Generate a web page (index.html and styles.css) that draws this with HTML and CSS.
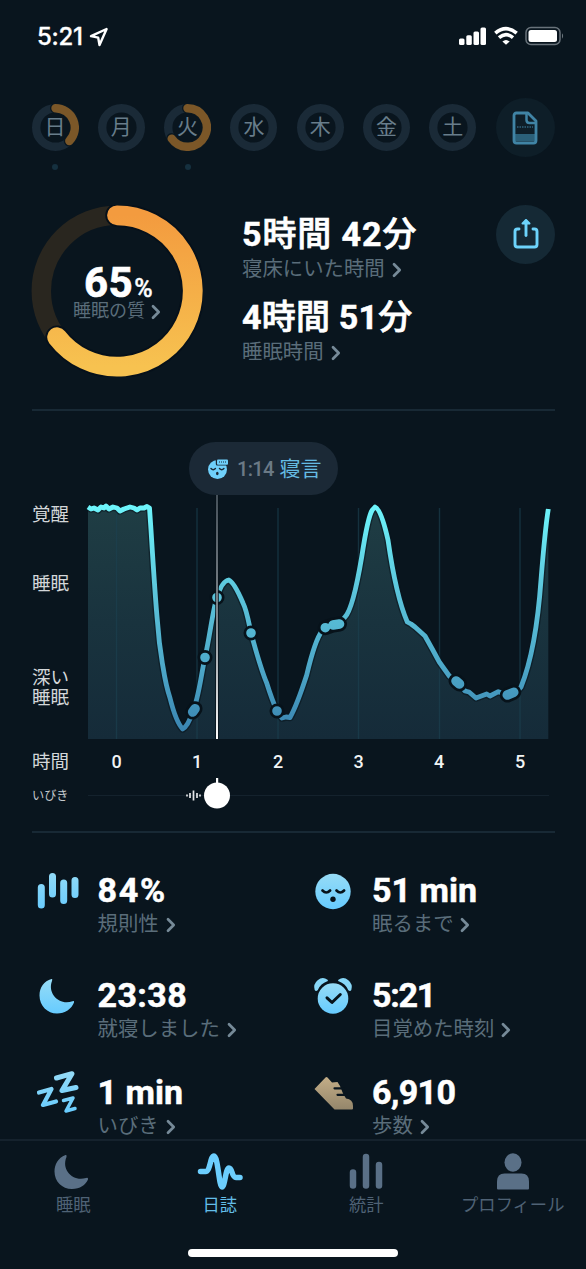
FILE: index.html
```html
<!DOCTYPE html>
<html lang="ja">
<head>
<meta charset="utf-8">
<title>日誌</title>
<link rel="stylesheet" href="styles.css">
</head>
<body>
<svg width="0" height="0" class="defs">
  <defs>
    <linearGradient id="sky" x1="0" y1="0" x2="0" y2="1"><stop offset="0" stop-color="#97dcf6"/><stop offset="1" stop-color="#66cbff"/></linearGradient>
    <linearGradient id="skyUser" gradientUnits="userSpaceOnUse" x1="0" y1="0" x2="0" y2="44"><stop offset="0" stop-color="#97dcf6"/><stop offset="1" stop-color="#66cbff"/></linearGradient>
    <linearGradient id="sand" x1="0" y1="0" x2="0" y2="1"><stop offset="0" stop-color="#c3ad87"/><stop offset="1" stop-color="#94866b"/></linearGradient>
    <symbol id="chev" viewBox="0 0 10 16"><path d="M2 2.200 7.700 8 2 13.800" fill="none" stroke="currentColor" stroke-width="2.700" stroke-linecap="round" stroke-linejoin="round"/></symbol>
  </defs>
</svg>
<div class="screen">
  <header class="status">
    <span class="clock">5:21</span>
    <svg class="loc" width="20" height="20" viewBox="0 0 20 20"><path d="M17.600 2 2 9.200l7.200 1.500 1.300 7.300z" fill="none" stroke="#fff" stroke-width="2.400" stroke-linejoin="round"/></svg>
    <svg class="signals" width="108" height="24" viewBox="0 0 108 24">
      <g fill="#fff">
        <rect x="1" y="14.500" width="5.500" height="6.500" rx="1.500"/><rect x="8.300" y="11.300" width="5.500" height="9.700" rx="1.500"/><rect x="15.500" y="7.500" width="5.500" height="13.500" rx="1.500"/><rect x="22.500" y="3.500" width="5.500" height="17.500" rx="1.500"/>
        <path d="m48 20.800-3.600-3.400q3.600-3 7.200 0z"/>
      </g>
      <g fill="none" stroke="#fff" stroke-width="3.600"><path d="M37.300 9.200q10.700-9 21.400 0"/><path d="M41 13.700q7-6 14 0"/></g>
      <rect x="68" y="3.500" width="34" height="17" rx="5" fill="none" stroke="#69737b" stroke-width="1.500"/>
      <rect x="70.500" y="6" width="28.500" height="12" rx="2.500" fill="#fff"/>
      <path d="M104 9.300q2.300 2.700 0 5.400z" fill="#69737b"/>
    </svg>
  </header>

  <nav class="days">
    <div class="day marked"><svg viewBox="0 0 47 47"><circle class="track" cx="23.500" cy="23.500" r="19.300"/><path class="halo" d="M23.500 4.200A19.300 19.300 0 0 1 37.300 37"/><path class="arc" d="M23.500 4.200A19.300 19.300 0 0 1 37.300 37"/></svg><span>日</span></div>
    <div class="day"><svg viewBox="0 0 47 47"><circle class="track" cx="23.500" cy="23.500" r="19.300"/></svg><span>月</span></div>
    <div class="day marked"><svg viewBox="0 0 47 47"><circle class="track" cx="23.500" cy="23.500" r="19.300"/><path class="halo" d="M23.500 4.200A19.300 19.300 0 1 1 7.700 34.600"/><path class="arc" d="M23.500 4.200A19.300 19.300 0 1 1 7.700 34.600"/></svg><span>火</span></div>
    <div class="day"><svg viewBox="0 0 47 47"><circle class="track" cx="23.500" cy="23.500" r="19.300"/></svg><span>水</span></div>
    <div class="day"><svg viewBox="0 0 47 47"><circle class="track" cx="23.500" cy="23.500" r="19.300"/></svg><span>木</span></div>
    <div class="day"><svg viewBox="0 0 47 47"><circle class="track" cx="23.500" cy="23.500" r="19.300"/></svg><span>金</span></div>
    <div class="day"><svg viewBox="0 0 47 47"><circle class="track" cx="23.500" cy="23.500" r="19.300"/></svg><span>土</span></div>
    <div class="round dim">
      <svg width="28" height="34" viewBox="0 0 28 34"><path d="M3 23h22v7H3z" fill="#2b6079"/><path d="M17 2H5.500Q3 2 3 4.500v25Q3 32 5.500 32h17q2.500 0 2.500-2.500V10z" fill="none" stroke="#4084a5" stroke-width="2.800" stroke-linejoin="round"/><path d="M15.500 3v6q0 3 3 3H25" fill="none" stroke="#4084a5" stroke-width="2.500"/><path d="M6 16h16" stroke="#4084a5" stroke-width="1.200" stroke-dasharray="1.500 1"/></svg>
    </div>
  </nav>

  <section class="summary">
    <div class="ring">
      <svg viewBox="0 0 172 172">
        <defs><linearGradient id="gold" x1="0" y1="0" x2="0" y2="1"><stop offset="0" stop-color="#f39b3f"/><stop offset="1" stop-color="#f7c250"/></linearGradient></defs>
        <circle cx="86" cy="86" r="75.700" fill="none" stroke="#29261f" stroke-width="19.500"/>
        <path d="M86 10.300A75.700 75.700 0 1 1 26.100 132.200" fill="none" stroke="#06101a" stroke-width="23.500" stroke-linecap="round"/>
        <path d="M86 10.300A75.700 75.700 0 1 1 26.100 132.200" fill="none" stroke="url(#gold)" stroke-width="19.800" stroke-linecap="round"/>
      </svg>
      <div class="score">
        <div class="pct">65<small>%</small></div>
        <div class="sub">睡眠の質<svg class="chev"><use href="#chev"/></svg></div>
      </div>
    </div>
    <div class="times">
      <div class="value inbed">5<span>時間</span> 42<span>分</span></div>
      <div class="sub">寝床にいた時間<svg class="chev"><use href="#chev"/></svg></div>
      <div class="value asleep">4<span>時間</span> 51<span>分</span></div>
      <div class="sub">睡眠時間<svg class="chev"><use href="#chev"/></svg></div>
    </div>
    <div class="round">
      <svg width="30" height="34" viewBox="0 0 30 34" fill="none" stroke="#6dd3fb" stroke-width="2.900" stroke-linecap="round" stroke-linejoin="round"><path d="M8 11H6.500Q4 11 4 13.500v13Q4 29 6.500 29h17q2.500 0 2.500-2.500v-13Q26 11 23.500 11H22"/><path d="M15 17.500V3"/><path d="m11.500 5.500 3.500-3.500 3.500 3.500z" fill="#6dd3fb" stroke-width="2"/></svg>
    </div>
  </section>

  <section class="graph">
    <div class="pill">
      <svg width="23" height="22" viewBox="0 0 23 22"><circle cx="10.500" cy="11.500" r="9.500" fill="#6fd0fb"/><rect x="8.800" y="0" width="13" height="7.500" rx="1.500" fill="#1b2936"/><rect x="10" y="1.500" width="11" height="5.200" rx="1" fill="#6fd0fb"/><path d="M12 4h7" stroke="#1b2936" stroke-width="1" stroke-dasharray="1 1"/><path d="M4 10.500q2.200 2.300 4.400 0M12.500 10.500q2.200 2.300 4.400 0" fill="none" stroke="#1b2936" stroke-width="1.500" stroke-linecap="round"/><ellipse cx="10.300" cy="15.500" rx="1.300" ry="1.700" fill="#1b2936"/></svg>
      <span class="at">1:14</span><span class="event">寝言</span>
    </div>
    <svg class="plot" width="586" height="336" viewBox="0 495 586 336">
      <defs>
        <linearGradient id="line" gradientUnits="userSpaceOnUse" x1="0" y1="507" x2="0" y2="729"><stop offset="0" stop-color="#6df4fb"/><stop offset=".4" stop-color="#5bc3da"/><stop offset=".7" stop-color="#4eaaca"/><stop offset="1" stop-color="#3b86b2"/></linearGradient>
        <linearGradient id="area" gradientUnits="userSpaceOnUse" x1="0" y1="507" x2="0" y2="739"><stop offset="0" stop-color="#1f3d44"/><stop offset=".5" stop-color="#19333e"/><stop offset="1" stop-color="#152b39"/></linearGradient>
        <linearGradient id="cursor" gradientUnits="userSpaceOnUse" x1="0" y1="495" x2="0" y2="739"><stop offset="0" stop-color="#46515a"/><stop offset=".5" stop-color="#81888e"/><stop offset="1" stop-color="#fff"/></linearGradient>
        <path id="curve" d="M88 507L91 509 94 508 98 510 101 507 104 508 106 506 109 509 113 507 117 508 120 511 124 509 127 508 130 507 134 508 137 510 140 508 144 508 147 506.500L149.500 508L151 530C153 562 156 607 157.500 622C159 645 161 655 163 667C166 686 168 692 170 698Q176 722 182.700 729Q188 726 192.700 712C199 697 201 675 205 657.500C210 636 213 608 217 597.500Q222 581 228.700 580Q234 582 243 603C247 611 249 624 251 633C255 647 260 667 266.700 683Q272 700 277 711L282 718 286 717 290 717.500Q297 705 306.700 675Q315 640 322 631L325.300 627.700 333 625 339.500 624 345 617Q353 609 361.700 557Q368 516 372.300 510L375 507Q381 509 388 540Q396 596 407.300 622L411 624 415 627 425 636 431.700 648 439.300 662 449.300 676 456 681 459.500 684 465 691 469 692 476 698 486.700 694 490 696 498.300 691.700 507.300 695 513.700 692.300Q518 691 521 687Q536 650 541 580Q545 530 548.300 509"/>
      </defs>
      <path class="fill" d="M88 507L149.500 508L151 530C153 562 156 607 157.500 622C159 645 161 655 163 667C166 686 168 692 170 698Q176 722 182.700 729Q188 726 192.700 712C199 697 201 675 205 657.500C210 636 213 608 217 597.500Q222 581 228.700 580Q234 582 243 603C247 611 249 624 251 633C255 647 260 667 266.700 683Q272 700 277 711L282 718 290 717.500Q297 705 306.700 675Q315 640 322 631L339.500 624 345 617Q353 609 361.700 557Q368 516 372.300 510L375 507Q381 509 388 540Q396 596 407.300 622L425 636 449.300 676 465 691 476 698 498.300 691.700 513.700 692.300 521 687Q536 650 541 580Q545 530 548.300 509V739H88z"/>
      <path class="ticks" d="M116.500 508V739M197 508V739M278 508V739M358.500 508V739M439.500 508V739M520 508V739"/>
      <use href="#curve" class="curve-shade"/>
      <use href="#curve" class="curve"/>
      <g class="dots-shade"><path d="M192.700 712L195 708.700M205 657.500h.01M217 597.500h.01M251 633h.01M277 711h.01M325.300 627.700L333 625 339.500 624M456 681L459.500 684M507.300 695L513.700 692.300"/></g>
      <g class="dots"><path d="M192.700 712L195 708.700M205 657.500h.01M217 597.500h.01M251 633h.01M277 711h.01M325.300 627.700h.01M333 625L339.500 624M456 681L459.500 684M507.300 695L513.700 692.300"/></g>
      <rect x="215" y="495" width="4" height="244" fill="#07121a" opacity=".75"/>
      <rect x="216" y="495" width="2" height="244" fill="url(#cursor)"/>
      <g class="ylab"><text x="32" y="520.500">覚醒</text><text x="32" y="589.500">睡眠</text><text><tspan x="32" y="684">深い</tspan><tspan x="32" y="703.500">睡眠</tspan></text><text x="32" y="767.500">時間</text></g>
      <text class="snore" x="32" y="799.500">いびき</text>
      <g class="xlab"><text x="116.500" y="767.500">0</text><text x="197" y="767.500">1</text><text x="278" y="767.500">2</text><text x="358.500" y="767.500">3</text><text x="439" y="767.500">4</text><text x="520" y="767.500">5</text></g>
      <path d="M88 795.500H549" stroke="#14222d"/>
      <path d="M187 794.500v2M190 793v5M193.500 790.500v10M197 793v5M200 794.500v2" stroke="#e4e6e8" stroke-width="1.700"/>
      <rect x="216" y="778" width="2.200" height="7" fill="#fff"/>
      <circle cx="217" cy="795.500" r="13" fill="#fff"/>
    </svg>
  </section>
  <div class="rule"></div>

  <section class="stats">
    <article>
      <svg class="icon" viewBox="0 0 42 44"><path d="M4.300 19.500v17.500M15.500 8.500v17.500M26.700 15v17.500M38 12.500v14" fill="none" stroke="url(#skyUser)" stroke-width="7" stroke-linecap="round"/></svg>
      <div><div class="value regularity">84%</div><div class="sub">規則性<svg class="chev"><use href="#chev"/></svg></div></div>
    </article>
    <article>
      <svg class="icon" viewBox="0 0 42 44"><circle cx="21" cy="23.500" r="17.700" fill="url(#sky)"/><path d="M10.500 22.500q3.800 4 7.600 0M24.500 22.500q3.800 4 7.600 0" fill="none" stroke="#07131b" stroke-width="2.700" stroke-linecap="round"/><circle cx="21" cy="31.300" r="2.700" fill="#07131b"/></svg>
      <div><div class="value">51 min</div><div class="sub">眠るまで<svg class="chev tight"><use href="#chev"/></svg></div></div>
    </article>
    <article>
      <svg class="icon" viewBox="0 0 42 44"><path d="M14.500 6C7 8 2.500 14.500 2.500 22.500C2.500 33 10.500 40.500 20 40.500C28 40.500 34.500 36 37 29.500Q37.500 27.500 35.500 28.200C23 33 10 21 15 8Q15.800 5.500 14.500 6z" fill="url(#sky)"/></svg>
      <div><div class="value bedtime">23:38</div><div class="sub">就寝しました<svg class="chev"><use href="#chev"/></svg></div></div>
    </article>
    <article>
      <svg class="icon" viewBox="0 0 42 44"><circle cx="21" cy="25.500" r="15.300" fill="url(#sky)"/><path d="M3.500 16.500C1.500 10 9 3 15 7.500Q8 10 5 16.500Q4 17.500 3.500 16.500zM38.500 16.500C40.500 10 33 3 27 7.500Q34 10 37 16.500Q38 17.500 38.500 16.500z" fill="#87d7f8" stroke="#87d7f8" stroke-width="1.800" stroke-linejoin="round"/><path d="m15 24.800 5 4.700 8.300-8" fill="none" stroke="#07131b" stroke-width="3" stroke-linecap="round" stroke-linejoin="round"/></svg>
      <div><div class="value wake">5:21</div><div class="sub">目覚めた時刻<svg class="chev"><use href="#chev"/></svg></div></div>
    </article>
    <article>
      <svg class="icon" viewBox="0 0 42 44"><g fill="none" stroke="url(#skyUser)" stroke-linecap="round" stroke-linejoin="round"><path d="m19.500 8 15.500-4.300L25 20.500 39 17.500" stroke-width="5"/><path d="m2 22.500 12.500-3.500L6 35l13-3.500" stroke-width="4.200"/><path d="m26.500 30.500 9.500-2.500L29 41l9-2.500" stroke-width="3.500"/></g></svg>
      <div><div class="value">1 min</div><div class="sub">いびき<svg class="chev"><use href="#chev"/></svg></div></div>
    </article>
    <article>
      <svg class="icon" viewBox="0 0 42 44"><path d="M2.500 19 13.500 7.500Q14.500 6.500 15.500 7.500l4.500 5 5.500-.5 2.500 4 3 7.500 3 5Q41 29 41 36v2.500q0 1-1 1H22.500z" fill="url(#sand)"/><path d="M22.500 18.300h9M25.500 24.800h9" fill="none" stroke="#09151e" stroke-width="2.200" stroke-linecap="round"/></svg>
      <div><div class="value steps">6,910</div><div class="sub">歩数<svg class="chev"><use href="#chev"/></svg></div></div>
    </article>
  </section>

  <footer class="tabs">
    <div class="tab"><svg viewBox="0 0 46 40"><path d="M15.500 3C8 6 4.500 12.500 4.500 19.500C4.500 29.500 12 37 22 37C30 37 35.500 33 38 27.500Q38.500 25 36 26C23 30 11 18 16.500 5Q17 2.500 15.500 3z" fill="#5a7087"/></svg><span>睡眠</span></div>
    <div class="tab on"><svg viewBox="0 0 46 40"><path d="M3.500 19.500h5c5 0 4.500-15.500 8.500-15.500s5 31 8 31 3.500-19 7-19 2.500 9.500 7 9.500h4" fill="none" stroke="#6ccefd" stroke-width="5.500" stroke-linecap="round" stroke-linejoin="round"/></svg><span>日誌</span></div>
    <div class="tab"><svg viewBox="0 0 46 40"><path d="M10 20.500v13M23 5v28.500M36 13v20.500" fill="none" stroke="#5a7087" stroke-width="6.500" stroke-linecap="round"/></svg><span>統計</span></div>
    <div class="tab"><svg viewBox="0 0 46 40"><ellipse cx="23" cy="10.500" rx="8.500" ry="9.300" fill="#5a7087"/><path d="M14.500 21.500h17Q39 21.500 39 29.500v7q0 1-1 1H8q-1 0-1-1v-7Q7 21.500 14.500 21.500z" fill="#5a7087"/></svg><span>プロフィール</span></div>
    <div class="home"></div>
  </footer>
</div>
</body>
</html>
```
FILE: styles.css
```css
* { box-sizing: border-box; }
body {
  margin: 0;
  background: #09151e;
  color: #fff;
  font-family: Roboto, "Noto Sans CJK JP", sans-serif;
}
.defs { display: block; height: 0; }
.screen {
  width: 586px;
  height: 1269px;
  overflow: hidden;
  display: flex;
  flex-direction: column;
}
.screen svg { display: block; flex: none; }

.status {
  flex: none;
  height: 98px;
  padding: 24px 20px 0 37px;
  display: flex;
  align-items: flex-start;
}
.clock { font: 500 24px/26px Inter, sans-serif; letter-spacing: -.3px; width: 47px; white-space: nowrap; -webkit-text-stroke: .3px #fff; }
.loc { margin: 3px 0 0 5px; }
.signals { margin: 0 0 0 auto; }

.days {
  flex: none;
  height: 107px;
  padding-left: 31.500px;
  display: flex;
  align-items: flex-start;
  gap: 19.300px;
}
.day {
  flex: none;
  width: 47px;
  padding-top: 6px;
  display: grid;
  justify-items: center;
}
.day > svg, .day > span { grid-area: 1 / 1; }
.day > svg { width: 47px; height: 47px; }
.day > span {
  font-size: 21px;
  line-height: 47px;
  color: #687d8b;
}
.marked::after {
  content: "";
  width: 6px;
  height: 6px;
  margin-top: 13px;
  border-radius: 50%;
  background: #15303f;
}
.track, .halo, .arc { fill: none; stroke-width: 8.400; stroke-linecap: round; }
.track { stroke: #1a2a37; }
.halo { stroke: #0a1720; stroke-width: 11; }
.arc { stroke: #7b5728; }
.round {
  flex: none;
  width: 59px;
  height: 59px;
  border-radius: 50%;
  background: #152935;
  display: flex;
  align-items: center;
  justify-content: center;
}
.round.dim { background: #0e1e28; }

.sub {
  display: flex;
  align-items: center;
  font-size: 20.400px;
  line-height: 32px;
  color: #5a6d7a;
  white-space: nowrap;
}
.screen .chev { width: 10px; height: 16px; margin: 1px 0 0 7px; color: #768a98; }
.screen .chev.tight { margin-left: 6px; }
.value {
  font-size: 34px;
  line-height: 36px;
  font-weight: 700;
  white-space: nowrap;
  -webkit-text-stroke: .5px #fff;
}
.value span { font-weight: 500; -webkit-text-stroke: .7px #fff; }
.inbed { letter-spacing: .9px; }
.asleep { letter-spacing: .2px; }
.regularity { letter-spacing: 1.700px; }
.bedtime { letter-spacing: .4px; }
.wake { letter-spacing: -1.300px; }
.steps { letter-spacing: -.6px; }

.summary {
  flex: none;
  height: 206px;
  margin: 0 31px 0 32px;
  border-bottom: 2px solid #182935;
  display: flex;
  align-items: flex-start;
}
.ring { width: 172px; height: 172px; margin-left: -1px; display: grid; }
.ring > svg, .score { grid-area: 1 / 1; }
.score { padding-top: 56px; }
.pct {
  padding-left: 53px;
  height: 44px;
  font-size: 42px;
  line-height: 44px;
  font-weight: 700;
  -webkit-text-stroke: .7px #fff;
  letter-spacing: .5px;
}
.pct small { font-size: 25px; line-height: 1; font-weight: 500; margin-left: 1px; -webkit-text-stroke: .4px #fff; }
.score .sub { padding-left: 42px; font-size: 18px; height: 12px; line-height: 12px; }
.score .sub .chev { margin-left: 6px; }
.times { flex: 1; padding: 11px 0 0 39px; }
.times .sub { height: 36px; line-height: 34px; padding-bottom: 2px; }
.times .value { height: 36px; }
.times .sub + .value { margin-top: 11px; }

.graph { flex: none; height: 420px; }
.rule { flex: none; height: 2px; margin: 0 31px 0 32px; background: #182935; }
.pill {
  width: 149px;
  height: 53px;
  margin: 31px 0 0 189px;
  padding-left: 18px;
  border-radius: 27px;
  background: #1b2936;
  display: flex;
  align-items: center;
  line-height: 30px;
  white-space: nowrap;
}
.at { margin-left: 7px; font-size: 20px; font-weight: 500; color: #6b7a86; letter-spacing: -.7px; }
.event { margin-left: 6px; font-size: 21px; color: #65bbe3; }
.fill { fill: url(#area); }
.ticks { stroke: #1c4050; stroke-opacity: .65; stroke-width: 1.400; }
.curve, .curve-shade { fill: none; stroke: url(#line); stroke-width: 4.800; stroke-linejoin: round; }
.curve-shade { stroke: #09151e; stroke-width: 7.500; stroke-opacity: .6; }
.dots, .dots-shade { fill: none; stroke: url(#line); stroke-width: 9.600; stroke-linecap: round; }
.dots-shade { stroke: #07121a; stroke-width: 15; }
.ylab { fill: #d3d7d9; font-size: 18.500px; }
.snore { fill: #c5cace; font-size: 12.200px; }
.xlab { fill: #f1f3f4; font-size: 18px; font-weight: 500; text-anchor: middle; }

.stats {
  flex: none;
  height: 306px;
  padding: 39px 0 0 37px;
  display: grid;
  grid-template-columns: 274.500px 1fr;
  grid-template-rows: 105px 97px 65px;
}
.stats article { display: flex; align-items: flex-start; gap: 18.500px; }
.icon { width: 42px; height: 44px; margin-top: -4px; }

.tabs {
  flex: none;
  height: 130px;
  border-top: 2px solid #15222d;
  background: #09151e;
  display: grid;
  grid-template-columns: repeat(4, 146.500px);
  grid-template-rows: 108px 8px;
}
.tab {
  padding-top: 11px;
  display: flex;
  flex-direction: column;
  align-items: center;
  font-size: 17.300px;
  line-height: 26px;
  color: #4f6275;
  white-space: nowrap;
}
.tab svg { width: 46px; height: 40px; }
.tab.on { color: #63bde8; }
.home { grid-column: 1 / -1; justify-self: center; width: 210px; height: 8px; border-radius: 4px; background: #fff; }
```
